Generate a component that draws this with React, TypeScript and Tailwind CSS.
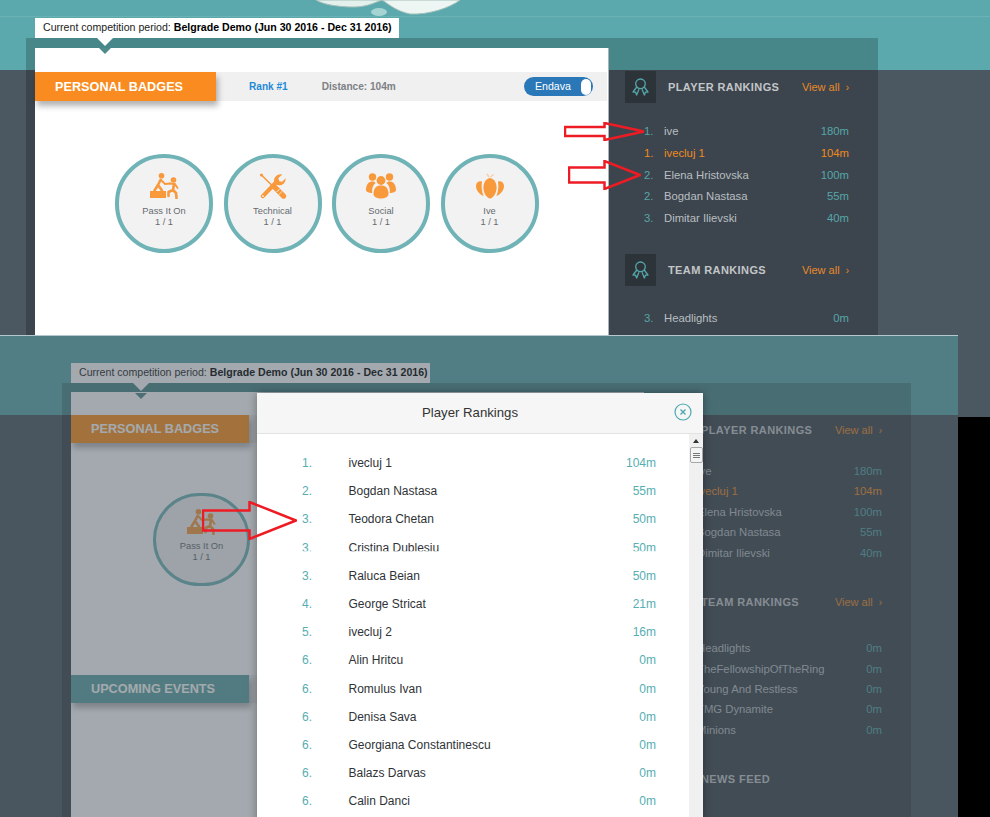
const topPlayers = [
  { rank: "1.", name: "ive", value: "180m" },
  { rank: "1.", name: "ivecluj 1", value: "104m", me: true },
  { rank: "2.", name: "Elena Hristovska", value: "100m" },
  { rank: "2.", name: "Bogdan Nastasa", value: "55m" },
  { rank: "3.", name: "Dimitar Ilievski", value: "40m" },
]

const topTeams = [
  { rank: "3.", name: "Headlights", value: "0m" },
  { rank: "3.", name: "TheFellowshipOfTheRing", value: "0m" },
  { rank: "3.", name: "Young And Restless", value: "0m" },
  { rank: "3.", name: "TMG Dynamite", value: "0m" },
  { rank: "3.", name: "Minions", value: "0m" },
]

const modalRows = [
  ["1.", "ivecluj 1", "104m"],
  ["2.", "Bogdan Nastasa", "55m"],
  ["3.", "Teodora Chetan", "50m"],
  ["3.", "Cristina Dublesiu", "50m"],
  ["3.", "Raluca Beian", "50m"],
  ["4.", "George Stricat", "21m"],
  ["5.", "ivecluj 2", "16m"],
  ["6.", "Alin Hritcu", "0m"],
  ["6.", "Romulus Ivan", "0m"],
  ["6.", "Denisa Sava", "0m"],
  ["6.", "Georgiana Constantinescu", "0m"],
  ["6.", "Balazs Darvas", "0m"],
  ["6.", "Calin Danci", "0m"],
]

function PassIcon() {
  return (
    <svg width="29" height="26" viewBox="0 0 29 26" fill="none" stroke="#f8993c" strokeLinecap="round" strokeLinejoin="round">
      <rect x="0" y="18" width="16" height="7" fill="#f8993c" stroke="none" />
      <circle cx="11.5" cy="2.8" r="2.8" fill="#f8993c" stroke="none" />
      <path d="M10.5 7 L8 12 L4.5 17.5 M8 12 L12 17.5" strokeWidth="2.6" />
      <path d="M11 7 L15 11 L20 10.5" strokeWidth="1.8" />
      <circle cx="23.5" cy="7" r="2.8" fill="#f8993c" stroke="none" />
      <path d="M24 11 L23 17 L18.5 19 L18.5 23 M23 17 L26 20 L26.5 25" strokeWidth="2.6" />
      <path d="M24 11 L20 10.5 M25 11 L27.5 15" strokeWidth="1.8" />
    </svg>
  )
}

function ToolsIcon() {
  return (
    <svg width="28" height="26" viewBox="0 0 28 27" fill="none" stroke="#f8993c" strokeLinecap="round">
      <path d="M2 2 L14 14" strokeWidth="1.6" />
      <circle cx="2" cy="2" r="1.6" fill="#f8993c" stroke="none" />
      <path d="M16 15 L25 24" strokeWidth="5.4" />
      <path d="M18 19.5 L20.5 17 M20.5 22 L23 19.5" stroke="#f2f2f2" strokeWidth="0.9" />
      <path d="M3.5 24 L17.5 9.5" strokeWidth="4.4" />
      <path d="M15 9.5 C14.5 4 19 0.5 23.5 1.5 L19.5 5.5 L20.5 8.5 L23.5 9 L27 5.5 C27.5 10 23.5 14 18.5 12.5 Z" fill="#f8993c" stroke="none" />
      <circle cx="3.5" cy="24" r="1" fill="#f2f2f2" stroke="none" />
    </svg>
  )
}

function SocialIcon() {
  return (
    <svg width="30" height="26" viewBox="0 0 30 26" fill="#f8993c">
      <circle cx="6.5" cy="4" r="3.7" />
      <circle cx="23.5" cy="4" r="3.7" />
      <path d="M0 17 C0 11 3 8.5 6.5 8.5 C8 8.5 9 9 9.5 10 C7 12 5.8 15 6.2 20 C3 20 0 19 0 17 Z" />
      <path d="M30 17 C30 11 27 8.5 23.5 8.5 C22 8.5 21 9 20.5 10 C23 12 24.2 15 23.8 20 C27 20 30 19 30 17 Z" />
      <circle cx="15" cy="7.5" r="4.4" />
      <path d="M7.5 21 C7.5 15 10.5 12.5 15 12.5 C19.5 12.5 22.5 15 22.5 21 C22.5 24 18.5 25.5 15 25.5 C11.5 25.5 7.5 24 7.5 21 Z" />
    </svg>
  )
}

function IveIcon() {
  return (
    <svg width="28" height="26" viewBox="0 0 28 26" fill="#f8993c">
      <path d="M13 4 L11 1 M14.5 4 L17.5 1.5" stroke="#f6cfa8" strokeWidth="1.4" fill="none" />
      <path d="M14 5 C19 6 21 11 20.5 16 C20 21 17 25 14 25.5 C11 25 8 21 7.5 16 C7 11 9 6 14 5 Z" />
      <path d="M6 8.5 C3 7.5 0 9.5 0 13 C0 17 3 21 7.5 23 C6 19 5 14 6 8.5 Z" />
      <path d="M22 8.5 C25 7.5 28 9.5 28 13 C28 17 25 21 20.5 23 C22 19 23 14 22 8.5 Z" />
    </svg>
  )
}

function RibbonIcon() {
  return (
    <svg width="17" height="18" viewBox="0 0 17 18" fill="none" stroke="#55a6a9" strokeWidth="1.3" strokeLinejoin="round">
      <circle cx="8.5" cy="5.8" r="4.8" />
      <path d="M4.8 9 L1 14 L3.6 14.2 L4.6 17 L7 11.2" />
      <path d="M12.2 9 L16 14 L13.4 14.2 L12.4 17 L10 11.2" />
    </svg>
  )
}

function RedArrow({ className, w, h, body }: { className: string; w: number; h: number; body: number }) {
  const mid = h / 2
  const shaft = w * 0.5
  return (
    <svg className={`absolute z-40 ${className}`} width={w} height={h} viewBox={`0 0 ${w} ${h}`} fill="none" stroke="#ed1c24" strokeWidth="2.5">
      <path d={`M1 ${mid - body / 2} H${shaft} V1 L${w - 1} ${mid} L${shaft} ${h - 1} V${mid + body / 2} H1 Z`} />
    </svg>
  )
}

function Badge({ label, icon, box, inner = "pt-[15px]", labelGap = "mt-[7px]" }: { label: string; icon: React.ReactNode; box: string; inner?: string; labelGap?: string }) {
  return (
    <div className={`${box} rounded-full border-[#6fb3b6] shrink-0 bg-[#f2f2f2] flex flex-col items-center ${inner} text-[#666b70] text-[9.3px] leading-[11px]`}>
      {icon}
      <span className={labelGap}>{label}</span>
      <span>1 / 1</span>
    </div>
  )
}

function Row({ row, height }: { row: { rank: string; name: string; value: string; me?: boolean }; height: string }) {
  return (
    <div className={`${height} flex items-center pl-[19px] text-[11.3px] ${row.me ? "text-[#ef8a22]" : "text-[#b9bec2]"}`}>
      <span className={`w-[20px] ${row.me ? "" : "text-[#57a5a8]"}`}>{row.rank}</span>
      <span className="flex-1 whitespace-nowrap">{row.name}</span>
      <span className={row.me ? "" : "text-[#57a5a8]"}>{row.value}</span>
    </div>
  )
}

function SideHeader({ title, viewAll = true }: { title: string; viewAll?: boolean }) {
  return (
    <div className="flex items-center h-[32px]">
      <div className="w-[31px] h-full bg-[#2c3439] flex items-center justify-center shrink-0">
        <RibbonIcon />
      </div>
      <span className="ml-[12px] text-[11px] font-bold tracking-[0.4px] text-[#c3c6c9] whitespace-nowrap">{title}</span>
      {viewAll && (
        <span className="ml-auto text-[11px] text-[#e8892a] whitespace-nowrap">
          View all <span className="ml-[3px] text-[10px]">›</span>
        </span>
      )}
    </div>
  )
}

function Period({ width }: { width: string }) {
  return (
    <div className={`relative ${width} h-[20px] bg-white pl-[8px] flex items-center text-[10.6px] text-[#222] whitespace-nowrap`}>
      <span>Current competition period:&nbsp;</span>
      <b className="text-black">Belgrade Demo (Jun 30 2016 - Dec 31 2016)</b>
      <svg className="absolute z-10 left-[60px] top-[20px]" width="20" height="17" viewBox="0 0 20 17">
        <path d="M2 0 H18 L10 8 Z" fill="#fff" />
        <path d="M4 10 H16 L10 16 Z" fill="#4f8a8c" />
      </svg>
    </div>
  )
}

function BarHead({ label, color, width }: { label: string; color: string; width: string }) {
  return (
    <div className={`${width} h-full ${color} pl-[20px] pt-[2px] flex items-center shrink-0 text-white font-bold text-[12.7px] shadow-[2px_5px_6px_rgba(0,0,0,0.3)]`}>
      {label}
    </div>
  )
}

function PanelBar({ label, color, h, width }: { label: string; color: string; h: string; width: string }) {
  return (
    <div className={`${h} w-[572px] bg-[#f0f0f0] flex items-center text-[10.1px] font-bold`}>
      <BarHead label={label} color={color} width={width} />
      <span className="ml-[33px] text-[#1f8ad8]">Rank #1</span>
      <span className="ml-[34px] text-[#7d8185]">Distance: 104m</span>
      <div className="ml-auto mr-[14px] w-[69px] h-[19px] rounded-full bg-[#2b78b8] flex items-center pl-[11px] pr-[2px] font-normal text-[10.6px] text-white">
        Endava
        <span className="ml-auto w-[10px] h-[16px] rounded-full bg-white"></span>
      </div>
    </div>
  )
}

export default function App() {
  const circle = "w-[98px] h-[99px] border-[4px]"
  return (
    <div className="relative w-[990px] h-[817px] overflow-hidden bg-black font-['Liberation_Sans',Arial,sans-serif]">
      {/* first screenshot */}
      <section className="relative h-[335px] pt-[18px] pl-[35px] overflow-hidden bg-[linear-gradient(#5ba9ac_70px,#4b5761_70px)]">
        <div className="absolute left-0 right-0 top-[16px] h-px bg-white/10"></div>
        <svg className="absolute left-[310px] top-0" width="160" height="20" viewBox="0 0 160 20">
          <path d="M6 0 C14 5 30 7 44 7 C56 7 64 3 72 0 Z" fill="#e4f0ec" stroke="#a3bfbb" />
          <path d="M72 0 C80 5 86 11 100 14 C118 15 140 8 150 0 Z" fill="#eef6f3" stroke="#a3bfbb" />
          <ellipse cx="69" cy="12" rx="8" ry="4" fill="#a5d4d2" />
        </svg>
        <Period width="w-[364px]" />
        <div className="relative ml-[-9px] w-[852px] h-[297px] bg-black/20 flex">
          <div className="ml-[9px] mt-[10px] w-[574px] bg-white border-r border-[#aab4b8]">
            <div className="mt-[24px]">
              <PanelBar label="PERSONAL BADGES" color="bg-[#f98b20]" h="h-[29px]" width="w-[181px]" />
            </div>
            <div className="ml-[80px] mt-[53px] flex gap-[10.5px]">
              <Badge box={circle} label="Pass It On" icon={<PassIcon />} />
              <Badge box={circle} label="Technical" icon={<ToolsIcon />} />
              <Badge box={circle} label="Social" icon={<SocialIcon />} />
              <Badge box={circle} label="Ive" icon={<IveIcon />} />
            </div>
          </div>
          <div className="ml-[16px] mt-[33px] w-[224px]">
            <SideHeader title="PLAYER RANKINGS" />
            <div className="mt-[18px]">
              {topPlayers.map((r, i) => <Row key={i} row={r} height="h-[21.7px]" />)}
            </div>
            <div className="mt-[25px]">
              <SideHeader title="TEAM RANKINGS" />
            </div>
            <div className="mt-[21px]">
              <Row row={topTeams[0]} height="h-[21.7px]" />
            </div>
          </div>
        </div>
      </section>

      <div className="flex">
        {/* second screenshot, modal open */}
        <section className="relative w-[958px] h-[482px] shrink-0 overflow-hidden border-t border-[#b5c8d0] pt-[27px] pl-[71px] bg-[linear-gradient(#5ba9ac_79px,#4b5761_79px)]">
          <Period width="w-[359px]" />
          <div className="relative ml-[-9px] w-[849px] h-[450px] bg-black/20 flex">
            <div className="ml-[9px] mt-[9px] w-[573px] bg-white shrink-0 overflow-hidden">
              <div className="mt-[23px]">
                <PanelBar label="PERSONAL BADGES" color="bg-[#ff901a]" h="h-[28px]" width="w-[178px]" />
              </div>
              <div className="ml-[82px] mt-[50px] flex">
                <Badge box="w-[97px] h-[93px] border-[3px]" inner="pt-[13px]" labelGap="mt-[6px]" label="Pass It On" icon={<PassIcon />} />
              </div>
              <div className="mt-[89px] h-[28px] w-[572px] bg-[#f0f0f0]">
                <BarHead label="UPCOMING EVENTS" color="bg-[#5aa2a2]" width="w-[178px]" />
              </div>
            </div>
            <div className="ml-[14px] mt-[31px] w-[224px] shrink-0">
              <SideHeader title="PLAYER RANKINGS" />
              <div className="mt-[15px]">
                {topPlayers.map((r, i) => <Row key={i} row={r} height="h-[20.5px]" />)}
              </div>
              <div className="mt-[23px]">
                <SideHeader title="TEAM RANKINGS" />
              </div>
              <div className="mt-[20px]">
                {topTeams.map((r, i) => <Row key={i} row={r} height="h-[20.4px]" />)}
              </div>
              <div className="mt-[23px]">
                <SideHeader title="NEWS FEED" viewAll={false} />
              </div>
            </div>
          </div>

          {/* dim layer + modal */}
          <div className="absolute z-20 inset-0 bg-[rgba(72,84,94,0.5)]"></div>
          <div className="absolute z-30 left-[257px] top-[57px] w-[446px] h-[430px] bg-white rounded-t-[2px] shadow-[0_0_10px_rgba(0,0,0,0.35)]">
            <div className="relative h-[41px] bg-[#f6f6f6] border-b border-[#e3e3e3] flex items-center justify-center pr-[20px] text-[13.2px] text-[#333]">
              Player Rankings
              <svg className="absolute left-[417px] top-[10px]" width="18" height="18" viewBox="0 0 18 18" fill="none" stroke="#4ba9ad" strokeWidth="1.2">
                <circle cx="9" cy="9" r="8" />
                <path d="M6.5 6.5 L11.5 11.5 M11.5 6.5 L6.5 11.5" strokeWidth="1.4" />
              </svg>
            </div>
            <div className="flex">
              <div className="flex-1 pt-[15px]">
                {modalRows.map((r, i) => (
                  <div key={i} className={`h-[28.2px] flex items-center pl-[45px] pr-[33px] text-[12px] ${i === 3 ? "[clip-path:inset(0_0_10.5px_0)]" : ""}`}>
                    <span className="w-[46.5px] text-[#56aeb2]">{r[0]}</span>
                    <span className="flex-1 text-[#2f3336]">{r[1]}</span>
                    <span className="text-[#56aeb2]">{r[2]}</span>
                  </div>
                ))}
              </div>
              <div className="w-[14px] h-[389px] bg-[#f0f0f0] flex flex-col items-center shrink-0">
                <div className="mt-[5px] w-0 h-0 border-x-[3.5px] border-x-transparent border-b-[4px] border-b-[#333]"></div>
                <div className="mt-[4px] w-[13px] h-[16px] bg-[#f4f4f4] border border-[#a8a8a8] rounded-[2px] flex flex-col items-center justify-center gap-[1px]">
                  <span className="w-[7px] h-px bg-[#777]"></span>
                  <span className="w-[7px] h-px bg-[#777]"></span>
                  <span className="w-[7px] h-px bg-[#777]"></span>
                </div>
              </div>
            </div>
          </div>
        </section>
        <div className="flex-1 h-[82px] bg-[#4b5761]"></div>
      </div>

      {/* red annotation arrows drawn on the screenshot */}
      <RedArrow className="left-[564px] top-[122px]" w={81} h={19} body={9} />
      <RedArrow className="left-[568px] top-[160px]" w={73} h={30} body={15} />
      <RedArrow className="left-[202px] top-[501px]" w={95} h={39} body={20} />
    </div>
  )
}
